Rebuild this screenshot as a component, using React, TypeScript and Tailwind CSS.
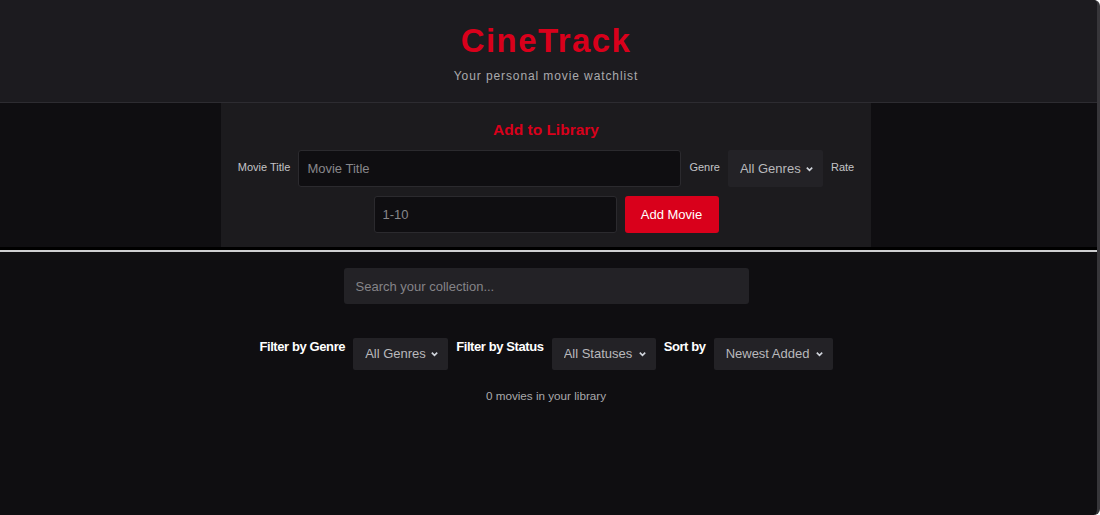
import React, { useState } from 'react';

const genres = ['All Genres', 'Action', 'Comedy', 'Drama', 'Horror', 'Sci-Fi'];
const statuses = ['All Statuses', 'Watched', 'Watching', 'Plan to Watch'];
const sorts = ['Newest Added', 'Oldest Added', 'Highest Rated', 'Title A-Z'];

const Chevron: React.FC = () => (
  <svg
    className="pointer-events-none absolute right-[9px] top-1/2 -translate-y-1/2 w-[9px] h-[9px] text-gray-300"
    viewBox="0 0 10 10"
    fill="none"
    stroke="currentColor"
    strokeWidth="1.8"
  >
    <path d="M2 3.5 5 6.5 8 3.5" />
  </svg>
);

interface SelectProps {
  options: string[];
  value: string;
  onChange: (v: string) => void;
  className: string;
}

const DarkSelect: React.FC<SelectProps> = ({ options, value, onChange, className }) => (
  <div className={`relative ${className}`}>
    <select
      value={value}
      onChange={(e) => onChange(e.target.value)}
      className="appearance-none w-full h-full bg-[#232226] text-[#b9b9bc] text-[13px] pl-3 pr-5 outline-none rounded-[2px]"
    >
      {options.map((o) => (
        <option key={o}>{o}</option>
      ))}
    </select>
    <Chevron />
  </div>
);

export default function App() {
  const [title, setTitle] = useState('');
  const [genre, setGenre] = useState('All Genres');
  const [rating, setRating] = useState('');
  const [search, setSearch] = useState('');
  const [filterGenre, setFilterGenre] = useState('All Genres');
  const [filterStatus, setFilterStatus] = useState('All Statuses');
  const [sortBy, setSortBy] = useState('Newest Added');

  return (
    <div
      className="min-h-[515px] bg-[#0f0e11] border-r-[3px] border-[#37363a] rounded-r-[6px] overflow-hidden flex flex-col"
      style={{ fontFamily: '"Liberation Sans", Arial, sans-serif' }}
    >
      {/* page header */}
      <header className="bg-[#1c1b1f] border-b border-[#2d2c31] h-[103px] flex flex-col items-center pt-[21px] pr-[5px]">
        <h1 className="text-[33px] leading-[40px] font-bold tracking-[1.4px] text-[#d9001b]">CineTrack</h1>
        <p className="mt-[6px] text-[12px] tracking-[0.9px] text-[#aaaaad]">Your personal movie watchlist</p>
      </header>

      {/* add form */}
      <div className="pr-[5px]">
        <section className="w-[650px] mx-auto bg-[#1c1b1e] pt-[18px] pb-[14px] flex flex-col items-center">
          <h2 className="text-[15.5px] leading-[18px] font-bold text-[#d9001b]">Add to Library</h2>
          <div className="mt-[11px] flex items-center gap-2">
            <label className="text-[11px] text-[#c4c4c7] -mt-[2px]">Movie Title</label>
            <input
              value={title}
              onChange={(e) => setTitle(e.target.value)}
              placeholder="Movie Title"
              className="w-[383px] h-[37px] bg-[#0f0e11] border border-[#2b2a2e] rounded-[3px] px-2 text-[13px] text-gray-200 placeholder:text-[#88878b] outline-none"
            />
            <label className="text-[11px] text-[#c4c4c7] -mt-[2px]">Genre</label>
            <DarkSelect options={genres} value={genre} onChange={setGenre} className="w-[95px] h-[37px]" />
            <label className="text-[11px] text-[#c4c4c7] -mt-[2px]">Rate</label>
          </div>
          <div className="mt-[9px] flex items-center gap-2">
            <input
              value={rating}
              onChange={(e) => setRating(e.target.value)}
              placeholder="1-10"
              className="w-[243px] h-[37px] bg-[#0f0e11] border border-[#2b2a2e] rounded-[3px] px-2 text-[13px] text-gray-200 placeholder:text-[#88878b] outline-none"
            />
            <button className="w-[94px] h-[37px] bg-[#d9001b] rounded-[3px] text-white text-[13px]">Add Movie</button>
          </div>
        </section>
      </div>

      {/* divider */}
      <div className="h-[3px] bg-black" />
      <div className="h-[2px] bg-[#cfcfd1]" />

      {/* library controls */}
      <section className="flex flex-col items-center pt-[16px] pr-[5px]">
        <input
          value={search}
          onChange={(e) => setSearch(e.target.value)}
          placeholder="Search your collection..."
          className="w-[405px] h-[36px] bg-[#232226] rounded-[3px] px-3 text-[13px] text-gray-200 placeholder:text-[#858488] outline-none"
        />
        <div className="mt-[34px] flex items-start gap-2">
          <span className="text-[13px] leading-[18px] font-bold tracking-[-0.4px] text-white">Filter by Genre</span>
          <DarkSelect options={genres} value={filterGenre} onChange={setFilterGenre} className="w-[95px] h-[32px]" />
          <span className="text-[13px] leading-[18px] font-bold tracking-[-0.4px] text-white">Filter by Status</span>
          <DarkSelect options={statuses} value={filterStatus} onChange={setFilterStatus} className="w-[104px] h-[32px]" />
          <span className="text-[13px] leading-[18px] font-bold tracking-[-0.4px] text-white">Sort by</span>
          <DarkSelect options={sorts} value={sortBy} onChange={setSortBy} className="w-[119px] h-[32px]" />
        </div>
        <p className="mt-[17px] text-[11.7px] text-[#a9a9ac]">0 movies in your library</p>
      </section>
    </div>
  );
}
